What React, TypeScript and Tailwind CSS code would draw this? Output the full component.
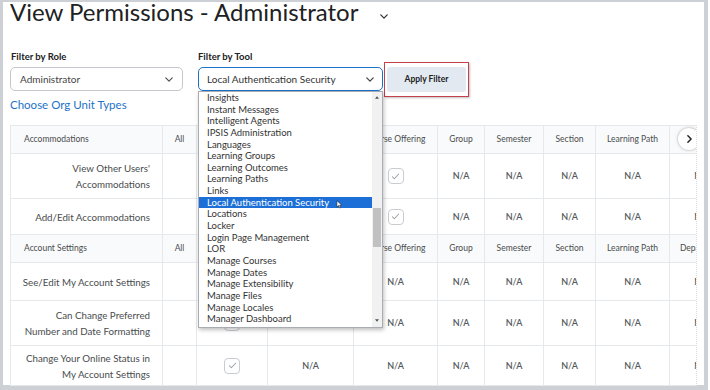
import React from "react";

// ─── Data ────────────────────────────────────────────────────

const toolOptions = [
  "Insights",
  "Instant Messages",
  "Intelligent Agents",
  "IPSIS Administration",
  "Languages",
  "Learning Groups",
  "Learning Outcomes",
  "Learning Paths",
  "Links",
  "Local Authentication Security",
  "Locations",
  "Locker",
  "Login Page Management",
  "LOR",
  "Manage Courses",
  "Manage Dates",
  "Manage Extensibility",
  "Manage Files",
  "Manage Locales",
  "Manager Dashboard",
];

const colWidths = [152, 34, 71, 86, 84, 47, 59, 52, 74, 66];
const orgCols = ["Org", "Course Template", "Course Offering", "Group", "Semester", "Section", "Learning Path", "Department"];

type Cell = "check" | "na" | "";

interface Row {
  lines: string[];
  cells: Cell[];
  h: number;
}

const groups: { title: string; rows: Row[] }[] = [
  {
    title: "Accommodations",
    rows: [
      { lines: ["View Other Users'", "Accommodations"], cells: ["check", "na", "check", "na", "na", "na", "na", "na"], h: 45 },
      { lines: ["Add/Edit Accommodations"], cells: ["check", "na", "check", "na", "na", "na", "na", "na"], h: 36 },
    ],
  },
  {
    title: "Account Settings",
    rows: [
      { lines: ["See/Edit My Account Settings"], cells: ["check", "na", "na", "na", "na", "na", "na", "na"], h: 38 },
      { lines: ["Can Change Preferred", "Number and Date Formatting"], cells: ["check", "na", "na", "na", "na", "na", "na", "na"], h: 45 },
      { lines: ["Change Your Online Status in", "My Account Settings"], cells: ["check", "na", "na", "na", "na", "na", "na", "na"], h: 40 },
    ],
  },
];

// ─── Small pieces ────────────────────────────────────────────

function Chevron({ className = "" }: { className?: string }) {
  return (
    <svg viewBox="0 0 10 6" className={className} fill="none" stroke="currentColor" strokeWidth="1.6" strokeLinecap="round" strokeLinejoin="round">
      <path d="M1 1l4 4 4-4" />
    </svg>
  );
}

function Check() {
  return (
    <span className="inline-flex h-[16px] w-[16px] items-center justify-center rounded-[4px] border border-[#c9ccd1] bg-white">
      <svg viewBox="0 0 12 12" className="h-[9px] w-[9px]" fill="none" stroke="#9ea2a7" strokeWidth="1.4" strokeLinecap="round" strokeLinejoin="round">
        <path d="M2 6.5l2.5 2.5L10 3" />
      </svg>
    </span>
  );
}

function Cursor() {
  return (
    <svg viewBox="0 0 10 14" className="absolute left-[137px] top-[3px] h-[9px] w-[7px]">
      <path d="M1 1v10l2.5-2.3L5.2 12.5l1.6-.7-1.7-3.7H8.5z" fill="#fff" stroke="#222" strokeWidth="0.9" strokeLinejoin="round" />
    </svg>
  );
}

// ─── Component ───────────────────────────────────────────────

export default function App() {
  return (
    <div
      className="h-[390px] w-[710px] overflow-hidden bg-white"
      style={{ fontFamily: "Lato, 'Noto Sans', sans-serif" }}
    >
      <div className="relative h-[390px] w-[708px] border-b-[5px] border-l-[3px] border-r-[4px] border-t-2 border-[#cdd1d5] px-[7px]">
        {/* Title */}
        <div className="flex h-[49px] items-start">
          <h1 className="-mt-[2px] text-[24px] leading-[24px] text-[#202122]">View Permissions - Administrator</h1>
          <Chevron className="ml-[22px] mt-[12px] h-[5px] w-[8px] text-[#333]" />
        </div>

        {/* Filters */}
        <div className="flex items-end">
          <div className="w-[173px]">
            <div className="ml-[1px] text-[9.5px] font-bold leading-[12px] text-[#202122]">Filter by Role</div>
            <div className="mt-[4px] flex h-[24px] items-center justify-between rounded-[5px] border border-[#c4c8cc] pl-[9px] pr-[9px] text-[10px] text-[#444]">
              Administrator
              <Chevron className="h-[5px] w-[8px] text-[#555]" />
            </div>
          </div>
          <div className="ml-[15px] w-[185px]">
            <div className="text-[9.5px] font-bold leading-[12px] text-[#202122]">Filter by Tool</div>
            <div className="mt-[4px] flex h-[24px] items-center justify-between rounded-[5px] border border-[#1a73c8] pl-[8px] pr-[8px] text-[10px] text-[#333]">
              Local Authentication Security
              <Chevron className="h-[5px] w-[8px] text-[#444]" />
            </div>
          </div>
          <div className="-mb-[6px] ml-[1px] border border-[#c4404a] px-[2px] py-[4px] shadow-[1px_1px_2px_rgba(0,0,0,0.25)]">
            <div className="flex h-[25px] w-[79px] items-center justify-center rounded-[3px] bg-[#e3e9f1] text-[8.5px] font-bold text-[#202122]">
              Apply Filter
            </div>
          </div>
        </div>

        <div className="mt-[6px] text-[11.5px] leading-[16px] text-[#1d72c7]">Choose Org Unit Types</div>

        {/* Table */}
        <div className="relative mt-[12px] w-[687px] overflow-hidden border-r border-dotted border-[#d9dce0]">
          <table className="table-fixed border-collapse" style={{ width: colWidths.reduce((a, b) => a + b, 0) }}>
            <colgroup>
              {colWidths.map((w, i) => (
                <col key={i} style={{ width: w }} />
              ))}
            </colgroup>
            <tbody>
              {groups.map((g) => (
                <React.Fragment key={g.title}>
                  <tr className="h-[28px] bg-[#f9fafb] text-[8.5px] text-[#494c4e]">
                    <td className="border border-[#e6e9ec] pl-[13px] text-left">{g.title}</td>
                    <td className="border border-[#e6e9ec] text-center">All</td>
                    {orgCols.map((c) => (
                      <td key={c} className="whitespace-nowrap border border-[#e6e9ec] text-center">{c}</td>
                    ))}
                  </tr>
                  {g.rows.map((r, ri) => (
                    <tr key={ri} className="bg-white" style={{ height: r.h }}>
                      <td className="border border-[#e6e9ec] pr-[12px] text-right text-[9.75px] leading-[16px] text-[#494c4e]">
                        {r.lines.map((l) => (
                          <div key={l}>{l}</div>
                        ))}
                      </td>
                      <td className="border border-[#e6e9ec]" />
                      {r.cells.map((c, ci) => (
                        <td key={ci} className="border border-[#e6e9ec] text-center text-[9px] font-semibold text-[#55595d]">
                          {c === "check" ? <span className="inline-flex align-middle"><Check /></span> : c === "na" ? "N/A" : null}
                        </td>
                      ))}
                    </tr>
                  ))}
                </React.Fragment>
              ))}
            </tbody>
          </table>
          {/* Scroll next button */}
          <div className="absolute right-[-4px] top-[3px] flex h-[22px] w-[22px] items-center justify-center rounded-full bg-white shadow-[0_0_3px_rgba(0,0,0,0.35)]">
            <svg viewBox="0 0 6 10" className="h-[8px] w-[5px]" fill="none" stroke="#202122" strokeWidth="1.8" strokeLinecap="round" strokeLinejoin="round">
              <path d="M1 1l4 4-4 4" />
            </svg>
          </div>
        </div>

        {/* Open dropdown list */}
        <div className="absolute left-[195px] top-[89px] flex h-[237px] w-[185px] border border-[#a9acb0] bg-white shadow-[1px_2px_4px_rgba(0,0,0,0.25)]">
          <div className="flex-1">
            {toolOptions.map((o) => {
              const sel = o === "Local Authentication Security";
              return (
                <div
                  key={o}
                  className={`relative h-[11.65px] pl-[8px] text-[9.5px] leading-[11.65px] ${sel ? "bg-[#1c6fd6] text-white" : "text-[#333]"}`}
                >
                  {o}
                  {sel && <Cursor />}
                </div>
              );
            })}
          </div>
          <div className="relative w-[10px] bg-[#f1f1f1]">
            <svg viewBox="0 0 6 4" className="absolute left-[3px] top-[4px] h-[3px] w-[4px]">
              <path d="M0 4L3 0l3 4z" fill="#505050" />
            </svg>
            <div className="absolute left-[1px] top-[116px] h-[39px] w-[8px] bg-[#c1c1c1]" />
            <svg viewBox="0 0 6 4" className="absolute bottom-[5px] left-[3px] h-[3px] w-[4px]">
              <path d="M0 0h6L3 4z" fill="#505050" />
            </svg>
          </div>
        </div>
      </div>
    </div>
  );
}
